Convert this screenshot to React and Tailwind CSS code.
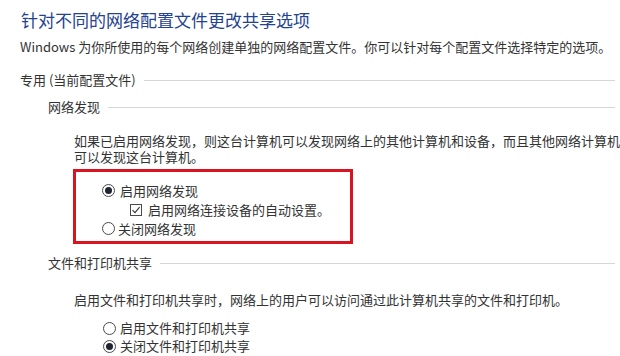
import React from 'react';

const font = { fontFamily: '"Noto Sans CJK SC", "Noto Sans", sans-serif' };

function Radio({ checked }) {
  return (
    <span className="flex h-[13px] w-[13px] shrink-0 items-center justify-center rounded-full border border-[#4a4a4a] bg-white">
      {checked && <span className="h-[7px] w-[7px] rounded-full bg-[#1f2430]" />}
    </span>
  );
}

function Checkbox() {
  return (
    <span className="flex h-[12px] w-[12px] shrink-0 items-center justify-center border border-[#4a4a4a] bg-white">
      <svg width="10" height="10" viewBox="0 0 10 10" fill="none">
        <path d="M1.5 5.2 L4 7.6 L8.6 2.2" stroke="#333" strokeWidth="1.1" />
      </svg>
    </span>
  );
}

function Heading({ children, className }) {
  return (
    <div className={`flex h-[18px] items-center gap-[8px] pr-[5px] ${className}`}>
      <span className="whitespace-nowrap">{children}</span>
      <span className="h-px flex-1 bg-[#d6d6d6]" />
    </div>
  );
}

export default function App() {
  return (
    <div
      className="flex h-[356px] w-[620px] flex-col overflow-hidden bg-white text-[13px] text-[#333]"
      style={font}
    >
      <h1 className="mt-[8px] pl-[21px] text-[17px] leading-[24px] font-normal whitespace-nowrap text-[#23428f]">
        针对不同的网络配置文件更改共享选项
      </h1>
      <p className="mt-[6px] pl-[20px] leading-[18px] whitespace-nowrap">
        Windows 为你所使用的每个网络创建单独的网络配置文件。你可以针对每个配置文件选择特定的选项。
      </p>

      <Heading className="mt-[15px] pl-[20px]">专用 (当前配置文件)</Heading>
      <Heading className="mt-[9px] pl-[48px]">网络发现</Heading>

      <div className="mt-[17px] pl-[74px] leading-[16px] whitespace-nowrap">
        <p>如果已启用网络发现，则这台计算机可以发现网络上的其他计算机和设备，而且其他网络计算机也</p>
        <p>可以发现这台计算机。</p>
      </div>

      <div className="mt-[4px] ml-[73px] flex h-[75px] w-[280px] flex-col border-[3px] border-[#d7141f] pt-[9px]">
        <div className="flex h-[19px] items-center gap-[5px] pl-[26px]">
          <Radio checked />
          <span>启用网络发现</span>
        </div>
        <div className="flex h-[19px] items-center gap-[6px] pl-[54px]">
          <Checkbox />
          <span>启用网络连接设备的自动设置。</span>
        </div>
        <div className="flex h-[19px] items-center gap-[3px] pl-[26px]">
          <Radio />
          <span>关闭网络发现</span>
        </div>
      </div>

      <Heading className="mt-[10px] pl-[48px]">文件和打印机共享</Heading>
      <p className="mt-[19px] pl-[74px] leading-[18px] whitespace-nowrap">
        启用文件和打印机共享时，网络上的用户可以访问通过此计算机共享的文件和打印机。
      </p>

      <div className="mt-[10px] flex flex-col pl-[103px]">
        <div className="flex h-[18px] items-center gap-[4px]">
          <Radio />
          <span>启用文件和打印机共享</span>
        </div>
        <div className="flex h-[18px] items-center gap-[4px]">
          <Radio checked />
          <span>关闭文件和打印机共享</span>
        </div>
      </div>
    </div>
  );
}
